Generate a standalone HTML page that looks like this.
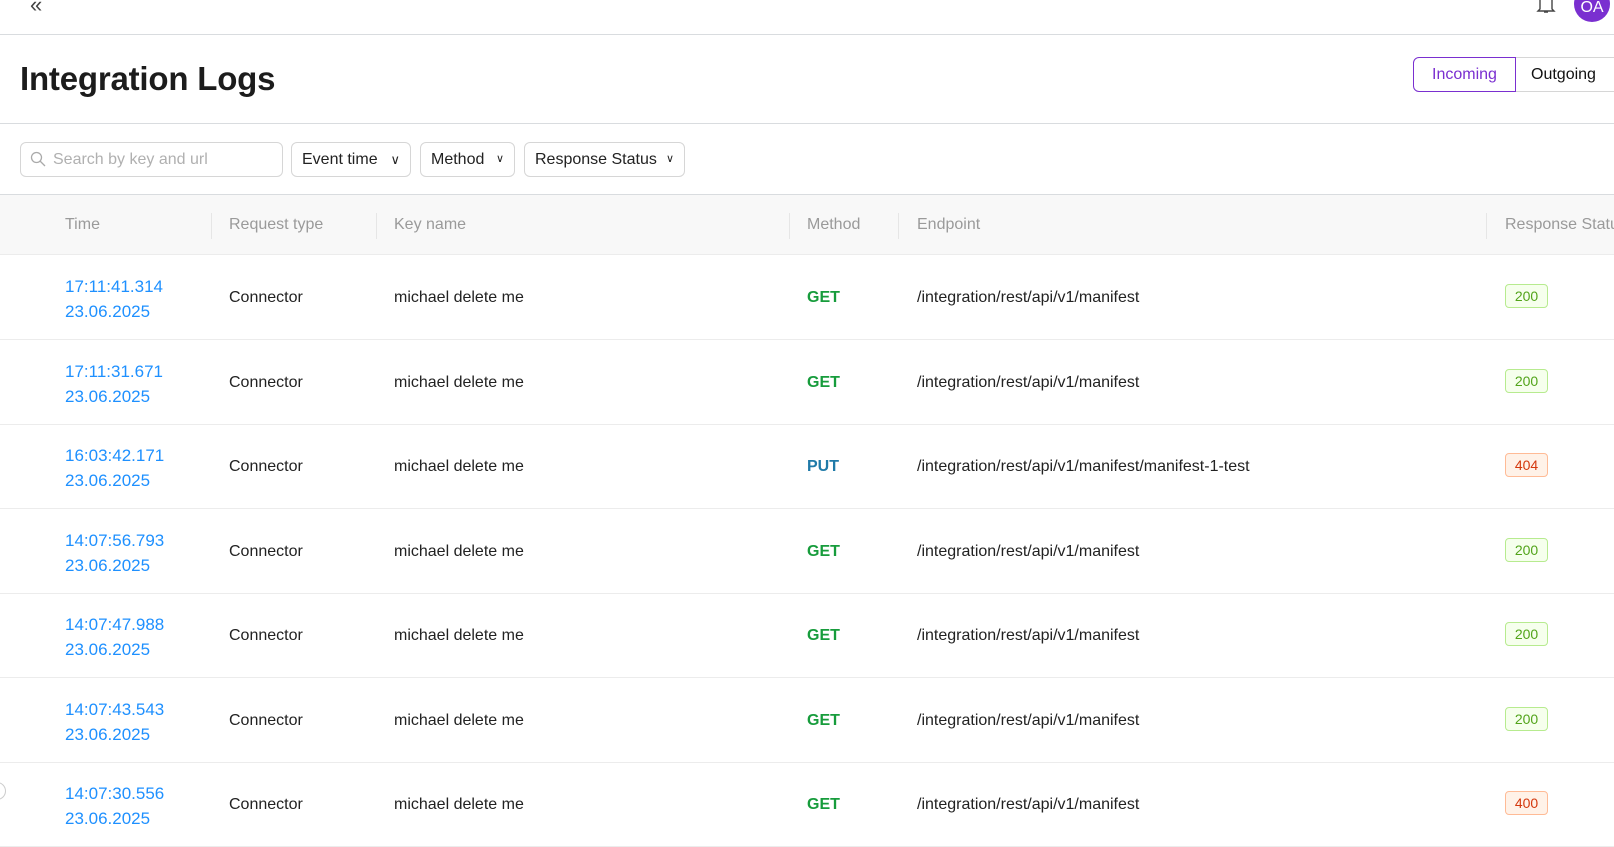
<!DOCTYPE html>
<html><head><meta charset="utf-8"><style>
*{box-sizing:border-box;margin:0;padding:0}
body{width:1614px;height:840px;overflow:hidden;background:#fff;font-family:"Liberation Sans",sans-serif;color:#222;position:relative}
.a{position:absolute;white-space:nowrap}
.hl{position:absolute;left:0;width:1614px;height:1px;background:#d9dcdf}
.btn{position:absolute;top:142px;height:35px;border:1px solid #d6d6d6;border-radius:6px;font-size:16px;line-height:33px;padding-left:10px;color:#222;white-space:nowrap}
.th{position:absolute;top:216px;font-size:16px;color:#9a9a9a;white-space:nowrap}
.dv{position:absolute;top:213px;width:1px;height:26px;background:#e6e6e6}
.row{position:absolute;left:0;width:1614px;height:85px;border-bottom:1px solid #ececec;font-size:16px}
.row div{position:absolute;white-space:nowrap}
.t{left:65px;top:19px;color:#1e90ff;line-height:25px;font-size:17px}
.c{top:34px}
.m{left:807px;top:34px;font-weight:bold;color:#179c3c}
.b{left:1505px;top:29px;width:43px;height:24px;border-radius:4px;font-size:14px;line-height:22px;text-align:center;border:1px solid #b7eb8f;background:#f6ffed;color:#52a41a}
.b.r{border-color:#ffbb96;background:#fff2e8;color:#d4380d}
</style></head><body>
<div class="a" style="left:30px;top:-8px;font-size:22px;color:#444">«</div>
<svg class="a" style="left:1536px;top:0" width="20" height="14"><path d="M4 0v9l-2 2h16l-2-2V0M8 12h4" fill="none" stroke="#444" stroke-width="1.4"/></svg>
<div class="a" style="left:1574px;top:-14px;width:36px;height:36px;border-radius:50%;background:#7a2fd0;color:#fff;font-size:16px;text-align:center;line-height:44px">OA</div>
<div class="hl" style="top:34px"></div>
<div class="a" style="left:20px;top:60px;font-size:33px;font-weight:bold;color:#1c1c1c;letter-spacing:-0.2px">Integration Logs</div>
<div class="a" style="left:1413px;top:57px;width:103px;height:35px;border:1px solid #7a2fd0;border-radius:6px 0 0 6px;color:#7a2fd0;font-size:16px;line-height:33px;text-align:center">Incoming</div>
<div class="a" style="left:1516px;top:57px;width:110px;height:35px;border:1px solid #d6d6d6;border-left:none;border-radius:0 6px 6px 0;font-size:16px;line-height:33px;padding-left:15px;color:#111">Outgoing</div>
<div class="hl" style="top:123px"></div>
<div class="btn" style="left:20px;width:263px;color:#b0b0b0;padding-left:32px">Search by key and url</div>
<svg class="a" style="left:30px;top:151px" width="16" height="16"><circle cx="6.5" cy="6.5" r="5" fill="none" stroke="#aaa" stroke-width="1.3"/><path d="M10 10l5 5" stroke="#aaa" stroke-width="1.3"/></svg>
<div class="btn" style="left:291px;width:120px">Event time <span style="position:absolute;right:10px;top:0;font-size:13px">∨</span></div>
<div class="btn" style="left:420px;width:95px">Method <span style="position:absolute;right:10px;top:0;font-size:11px">∨</span></div>
<div class="btn" style="left:524px;width:161px">Response Status <span style="position:absolute;right:10px;top:0;font-size:11px">∨</span></div>
<div class="hl" style="top:194px"></div>
<div class="a" style="left:0;top:195px;width:1614px;height:60px;background:#f8f8f8;border-bottom:1px solid #ececec"></div>
<div class="th" style="left:65px">Time</div>
<div class="dv" style="left:211px"></div><div class="th" style="left:229px">Request type</div>
<div class="dv" style="left:376px"></div><div class="th" style="left:394px">Key name</div>
<div class="dv" style="left:789px"></div><div class="th" style="left:807px">Method</div>
<div class="dv" style="left:898px"></div><div class="th" style="left:917px">Endpoint</div>
<div class="dv" style="left:1486px"></div><div class="th" style="left:1505px">Response Status</div>

<div class="row" style="top:255px"><div class="t">17:11:41.314<br>23.06.2025</div><div class="c" style="left:229px">Connector</div><div class="c" style="left:394px">michael delete me</div><div class="m">GET</div><div class="c" style="left:917px">/integration/rest/api/v1/manifest</div><div class="b">200</div></div>
<div class="row" style="top:340px"><div class="t">17:11:31.671<br>23.06.2025</div><div class="c" style="left:229px">Connector</div><div class="c" style="left:394px">michael delete me</div><div class="m">GET</div><div class="c" style="left:917px">/integration/rest/api/v1/manifest</div><div class="b">200</div></div>
<div class="row" style="top:424px"><div class="t">16:03:42.171<br>23.06.2025</div><div class="c" style="left:229px">Connector</div><div class="c" style="left:394px">michael delete me</div><div class="m" style="color:#1f7aa8">PUT</div><div class="c" style="left:917px">/integration/rest/api/v1/manifest/manifest-1-test</div><div class="b r">404</div></div>
<div class="row" style="top:509px"><div class="t">14:07:56.793<br>23.06.2025</div><div class="c" style="left:229px">Connector</div><div class="c" style="left:394px">michael delete me</div><div class="m">GET</div><div class="c" style="left:917px">/integration/rest/api/v1/manifest</div><div class="b">200</div></div>
<div class="row" style="top:593px"><div class="t">14:07:47.988<br>23.06.2025</div><div class="c" style="left:229px">Connector</div><div class="c" style="left:394px">michael delete me</div><div class="m">GET</div><div class="c" style="left:917px">/integration/rest/api/v1/manifest</div><div class="b">200</div></div>
<div class="row" style="top:678px"><div class="t">14:07:43.543<br>23.06.2025</div><div class="c" style="left:229px">Connector</div><div class="c" style="left:394px">michael delete me</div><div class="m">GET</div><div class="c" style="left:917px">/integration/rest/api/v1/manifest</div><div class="b">200</div></div>
<div class="row" style="top:762px"><div class="t">14:07:30.556<br>23.06.2025</div><div class="c" style="left:229px">Connector</div><div class="c" style="left:394px">michael delete me</div><div class="m">GET</div><div class="c" style="left:917px">/integration/rest/api/v1/manifest</div><div class="b r">400</div></div>
<div class="a" style="left:-12px;top:782px;width:18px;height:18px;border:1px solid #ccc;border-radius:50%;background:#fff"></div>
</body></html>
